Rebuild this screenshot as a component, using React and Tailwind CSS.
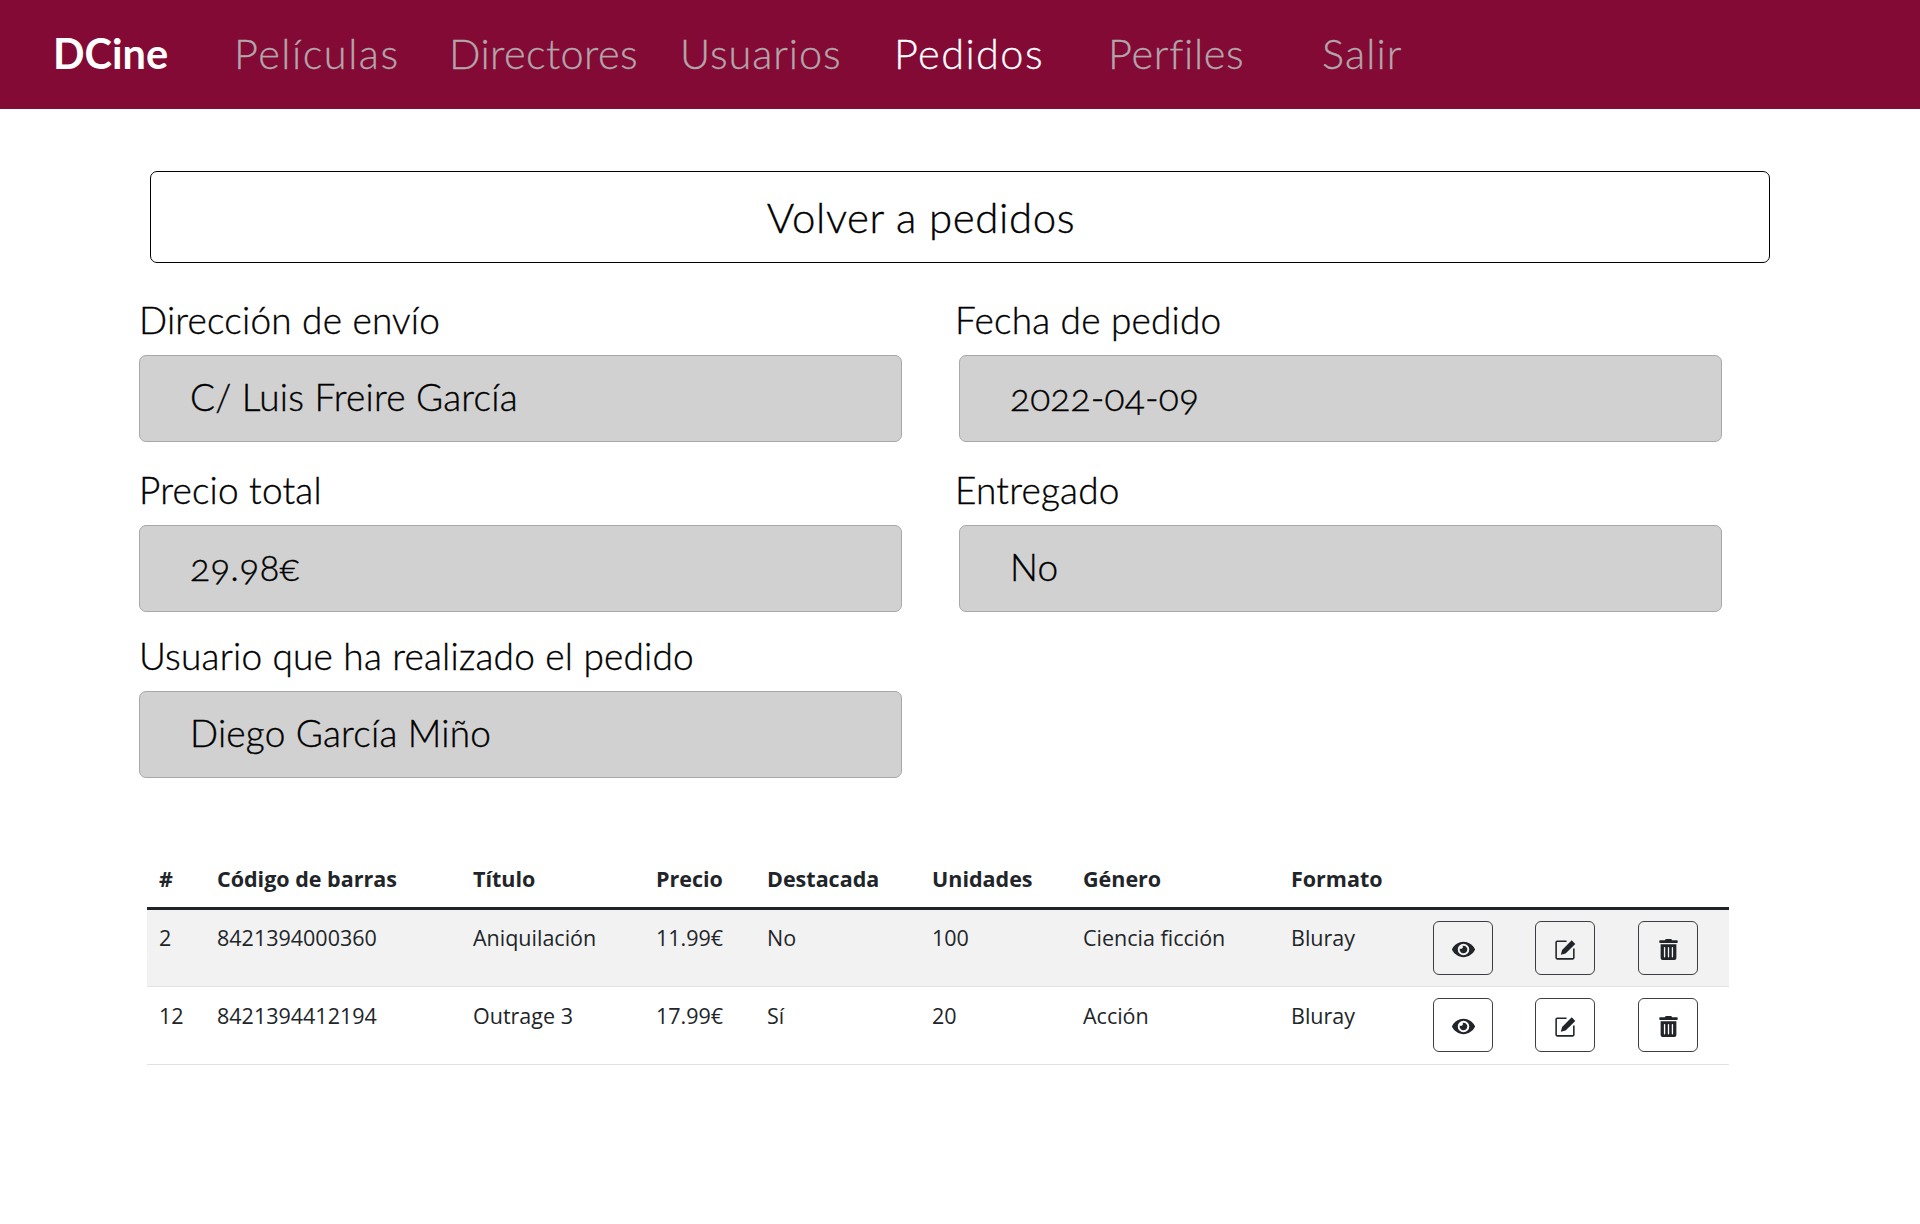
import { FaEye, FaTrashAlt } from "react-icons/fa";

const links = [
  { label: "Películas", cls: "ml-[79px] w-[215px] tracking-[1.5px] text-[#b3a6ab]" },
  { label: "Directores", cls: "w-[231px] tracking-[0.4px] text-[#b3a6ab]" },
  { label: "Usuarios", cls: "w-[214px] tracking-[0.9px] text-[#b3a6ab]" },
  { label: "Pedidos", cls: "w-[214px] tracking-[1.4px] text-white" },
  { label: "Perfiles", cls: "w-[214px] tracking-[0.7px] text-[#b3a6ab]" },
  { label: "Salir", cls: "tracking-[1.1px] text-[#b3a6ab]" }
];

const columns = ["#", "Código de barras", "Título", "Precio", "Destacada", "Unidades", "Género", "Formato"];

const rows = [
  ["2", "8421394000360", "Aniquilación", "11.99€", "No", "100", "Ciencia ficción", "Bluray"],
  ["12", "8421394412194", "Outrage 3", "17.99€", "Sí", "20", "Acción", "Bluray"]
];

const widths = ["w-[58px]", "w-[256px]", "w-[183px]", "w-[111px]", "w-[165px]", "w-[151px]", "w-[208px]", "w-[142px]", "w-[102px]", "w-[103px]", "w-[103px]"];

function Field({ label, value, className = "" }) {
  return (
    <div className={className}>
      <label className="block h-[37px] text-[37px] leading-[37px] font-light tracking-[0.2px] text-black [-webkit-text-stroke:0.35px_black]">{label}</label>
      <div className="mt-[17px] flex h-[87px] w-[763px] items-center rounded-[7px] border border-[#a8a8a8] bg-[#d1d1d1] pb-[3px] pl-[50px] text-[37px] font-light tracking-[0.2px] text-black [-webkit-text-stroke:0.35px_black] [font-feature-settings:'onum']">
        {value}
      </div>
    </div>
  );
}

function ActionButton({ children }) {
  return (
    <button type="button" className="grid h-[54px] w-[60px] place-items-center rounded-[6px] border border-[#3b3f44] pt-[3px] text-[#212529]">
      {children}
    </button>
  );
}

function EditIcon() {
  return (
    <svg width="25" height="25" viewBox="0 0 24 24" fill="none">
      <path d="M13 4H4a1 1 0 0 0-1 1v15a1 1 0 0 0 1 1h15a1 1 0 0 0 1-1v-9" stroke="currentColor" strokeWidth="1.5" />
      <path d="M7.5 17l1.2-4.6L18 3.2l3.4 3.4-9.3 9.2z" fill="currentColor" />
    </svg>
  );
}

export default function App() {
  return (
    <div className="min-h-[1224px] bg-white font-['Lato',sans-serif]">
      <nav className="flex h-[109px] items-center bg-[#820a35] pb-[3px] pl-[53px] text-[41.5px]">
        <a className="w-[102px] font-bold text-white">DCine</a>
        {links.map((link) => (
          <a key={link.label} className={`font-light [-webkit-text-stroke:0.3px_currentColor] ${link.cls}`}>{link.label}</a>
        ))}
      </nav>

      <div className="ml-[150px] mt-[62px] flex h-[92px] w-[1620px] items-center justify-center rounded-[7px] border border-black pr-[78px] text-[42px] font-light tracking-[0.6px] text-black [-webkit-text-stroke:0.35px_black]">
        Volver a pedidos
      </div>

      <div className="ml-[139px] mt-[38px] grid w-[1590px] grid-cols-[816px_1fr]">
        <Field label="Dirección de envío" value="C/ Luis Freire García" />
        <Field label="Fecha de pedido" value="2022-04-09" className="[&>div]:ml-[4px]" />
        <Field label="Precio total" value="29.98€" className="mt-[29px]" />
        <Field label="Entregado" value="No" className="mt-[29px] [&>div]:ml-[4px]" />
        <Field label="Usuario que ha realizado el pedido" value="Diego García Miño" className="mt-[25px]" />
      </div>

      <table className="ml-[147px] mt-[73px] w-[1582px] table-fixed border-collapse font-['Open_Sans',sans-serif] text-[21.5px] text-[#212529]">
        <thead>
          <tr className="h-[57px] border-b-[3px] border-[#212529]">
            {columns.map((col, i) => (
              <th key={col} className={`${widths[i]} pl-[12px] text-left font-bold`}>{col}</th>
            ))}
            <th className={widths[8]} />
            <th className={widths[9]} />
            <th className={widths[10]} />
          </tr>
        </thead>
        <tbody>
          {rows.map((row, r) => (
            <tr key={row[0]} className={`h-[78px] border-b border-[#dee2e6] ${r === 0 ? "bg-[#f2f2f2]" : ""}`}>
              {row.map((cell, i) => (
                <td key={i} className="pl-[12px] pb-[18px] align-middle whitespace-nowrap">{cell}</td>
              ))}
              <td className="pl-[12px]"><ActionButton><FaEye size={23} /></ActionButton></td>
              <td className="pl-[12px]"><ActionButton><EditIcon /></ActionButton></td>
              <td className="pl-[12px]"><ActionButton><FaTrashAlt size={21} /></ActionButton></td>
            </tr>
          ))}
        </tbody>
      </table>
    </div>
  );
}
